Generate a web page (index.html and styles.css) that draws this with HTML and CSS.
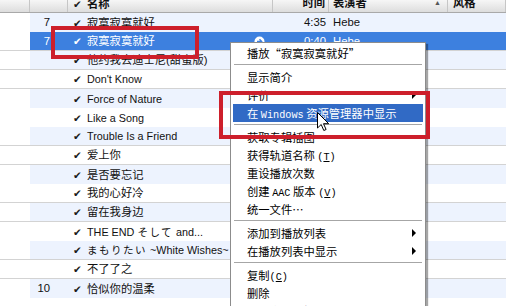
FILE: index.html
```html
<!DOCTYPE html>
<html lang="zh">
  <head>
    <meta charset="UTF-8" />
    <title>资料库</title>
    <link rel="stylesheet" href="styles.css">
  </head>
  <body>
    <div class="list">
      <div class="head">
        <span class="c-pad"></span>
        <span class="c-num"></span>
        <span class="c-name"><i class="chk">✔</i>名称</span>
        <span class="c-time">时间</span>
        <span class="c-artist">表演者<b class="sort">▲</b></span>
        <span class="c-genre">风格</span>
      </div>

      <div class="row odd">
        <span class="c-pad"></span>
        <div class="cells">
          <span class="c-num">7</span>
          <span class="c-name"><i class="chk">✔</i>寂寞寂寞就好</span>
          <span class="c-time">4:35</span>
          <span class="c-artist">Hebe</span>
          <span class="c-genre"></span>
        </div>
      </div>
      <div class="row sel line">
        <span class="c-pad"></span>
        <div class="cells">
          <span class="c-num">7</span>
          <span class="c-name"><i class="chk">✔</i>寂寞寂寞就好
            <svg class="link" width="11" height="11" viewBox="0 0 11 11"><circle cx="5.5" cy="5.5" r="5" fill="#fff"/><path d="M3 5.5h4.5M5.5 3.3l2.2 2.2-2.2 2.2" stroke="#3d80df" stroke-width="1.4" fill="none"/></svg>
          </span>
          <span class="c-time">0:40</span>
          <span class="c-artist">Hebe</span>
          <span class="c-genre"></span>
        </div>
      </div>
      <div class="row odd line">
        <span class="c-pad"></span>
        <div class="cells">
          <span class="c-num"></span>
          <span class="c-name"><i class="chk">✔</i>他约我去迪士尼(甜蜜版)</span>
        </div>
      </div>
      <div class="row line">
        <span class="c-pad"></span>
        <div class="cells">
          <span class="c-num"></span>
          <span class="c-name"><i class="chk">✔</i><span class="en">Don't Know</span></span>
        </div>
      </div>
      <div class="row odd">
        <span class="c-pad"></span>
        <div class="cells">
          <span class="c-num"></span>
          <span class="c-name"><i class="chk">✔</i><span class="en">Force of Nature</span></span>
        </div>
      </div>
      <div class="row">
        <span class="c-pad"></span>
        <div class="cells">
          <span class="c-num"></span>
          <span class="c-name"><i class="chk">✔</i><span class="en">Like a Song</span></span>
        </div>
      </div>
      <div class="row odd line">
        <span class="c-pad"></span>
        <div class="cells">
          <span class="c-num"></span>
          <span class="c-name"><i class="chk">✔</i><span class="en">Trouble Is a Friend</span></span>
        </div>
      </div>
      <div class="row line">
        <span class="c-pad"></span>
        <div class="cells">
          <span class="c-num"></span>
          <span class="c-name"><i class="chk">✔</i>爱上你</span>
        </div>
      </div>
      <div class="row odd">
        <span class="c-pad"></span>
        <div class="cells">
          <span class="c-num"></span>
          <span class="c-name"><i class="chk">✔</i>是否要忘记</span>
        </div>
      </div>
      <div class="row line">
        <span class="c-pad"></span>
        <div class="cells">
          <span class="c-num"></span>
          <span class="c-name"><i class="chk">✔</i>我的心好冷</span>
        </div>
      </div>
      <div class="row odd line">
        <span class="c-pad"></span>
        <div class="cells">
          <span class="c-num"></span>
          <span class="c-name"><i class="chk">✔</i>留在我身边</span>
        </div>
      </div>
      <div class="row">
        <span class="c-pad"></span>
        <div class="cells">
          <span class="c-num"></span>
          <span class="c-name"><i class="chk">✔</i><span class="en">THE END&nbsp;</span><span class="kana">そして</span><span class="en">&nbsp;and...</span></span>
        </div>
      </div>
      <div class="row odd line">
        <span class="c-pad"></span>
        <div class="cells">
          <span class="c-num"></span>
          <span class="c-name"><i class="chk">✔</i><span class="kana">まもりたい</span><span class="en">&nbsp;~White Wishes~</span></span>
        </div>
      </div>
      <div class="row line">
        <span class="c-pad"></span>
        <div class="cells">
          <span class="c-num"></span>
          <span class="c-name"><i class="chk">✔</i>不了了之</span>
        </div>
      </div>
      <div class="row odd">
        <span class="c-pad"></span>
        <div class="cells">
          <span class="c-num">10</span>
          <span class="c-name"><i class="chk">✔</i>恰似你的温柔</span>
        </div>
      </div>
      <div class="row">
        <span class="c-pad"></span>
        <div class="cells"></div>
      </div>
    </div>

    <!-- context menu -->
    <div class="menu">
      <div class="item">播放“寂寞寂寞就好”</div>
      <div class="sep"></div>
      <div class="item">显示简介</div>
      <div class="item sub">评价</div>
      <div class="item on">在 <span class="mono">Windows</span> 资源管理器中显示</div>
      <div class="sep"></div>
      <div class="item">获取专辑插图</div>
      <div class="item">获得轨道名称 <span class="mono">(<u>T</u>)</span></div>
      <div class="item">重设播放次数</div>
      <div class="item">创建 <span class="mono">AAC</span> 版本 <span class="mono">(<u>V</u>)</span></div>
      <div class="item">统一文件…</div>
      <div class="sep"></div>
      <div class="item sub">添加到播放列表</div>
      <div class="item sub">在播放列表中显示</div>
      <div class="sep"></div>
      <div class="item">复制<span class="mono">(<u>C</u>)</span></div>
      <div class="item">删除</div>
      <div class="item">取消全部选择</div>
    </div>

    <div class="mark mark-row"></div>
    <div class="mark mark-item"></div>

    <svg class="cursor" width="13" height="20" viewBox="0 0 13 20">
      <path d="M0.5 0.5v15.5l3.7-3.5 2.6 6 2.3-1-2.6-5.8h5.2z" fill="#fff" stroke="#000" stroke-width="1" stroke-linejoin="round"/>
    </svg>
  </body>
</html>
```

FILE: styles.css
```css
body {
  margin: 0;
  width: 520px;
  height: 306px;
  overflow: hidden;
  position: relative;
  background: #fff;
  color: #111;
  font-family: "Liberation Sans", "Noto Sans CJK SC", sans-serif;
  font-size: 11.3px;
}
.list {
  width: 506px;
}
.head {
  display: flex;
  height: 13px;
  box-sizing: border-box;
  border-bottom: 1px solid #a9a9a9;
  background: linear-gradient(#f6f6f6, #dddddd);
  font-weight: bold;
  overflow: hidden;
}
.head > span {
  box-sizing: border-box;
  height: 16px;
  margin-top: -4px;
  line-height: 14px;
  border-right: 1px solid #c6c6c6;
}
.c-pad {
  flex: none;
  width: 30px;
}
.c-num {
  flex: none;
  width: 38px;
  padding-right: 18px;
  box-sizing: border-box;
  text-align: right;
}
.c-name {
  flex: none;
  width: 205px;
  padding-left: 5px;
  box-sizing: border-box;
  display: flex;
  align-items: center;
  white-space: nowrap;
  overflow: hidden;
}
.c-time {
  flex: none;
  width: 56px;
  padding-right: 3px;
  box-sizing: border-box;
  text-align: right;
}
.c-artist {
  flex: none;
  width: 119px;
  padding: 0 6px 0 4px;
  box-sizing: border-box;
  display: flex;
  justify-content: space-between;
}
.c-genre {
  flex: none;
  width: 58px;
  padding-left: 5px;
  box-sizing: border-box;
}
.sort {
  font-size: 7px;
  color: #555;
  font-weight: normal;
}
.chk {
  display: inline-block;
  width: 14px;
  flex: none;
  font-style: normal;
  font-family: "DejaVu Sans", sans-serif;
  font-size: 10.5px;
  color: #1a1a1a;
}
.en {
  font-size: 10.8px;
}
.kana {
  letter-spacing: 1.5px;
  font-size: 10.5px;
}

.row {
  display: flex;
  height: 19px;
  line-height: 18px;
  box-sizing: border-box;
}
.row.line {
  border-bottom: 1px solid #d3d3d3;
}
.cells {
  display: flex;
  flex: 1;
}
.odd .cells {
  background: #edf3fe;
}
.sel .cells {
  background: #3d80df;
  color: #fff;
}
.sel .chk {
  color: #fff;
}
.link {
  margin-left: auto;
  margin-right: 8px;
}

.menu {
  position: absolute;
  left: 230px;
  top: 42px;
  width: 196px;
  box-sizing: border-box;
  padding: 1px 2px;
  border: 1px solid #8c8c8c;
  background: #fff;
  box-shadow: 2px 2px 1px rgba(0, 0, 0, 0.35);
  font-family: "Noto Sans CJK SC", sans-serif;
  font-size: 11.3px;
  color: #000;
}
.item {
  position: relative;
  height: 18px;
  line-height: 18px;
  padding-left: 14px;
  white-space: nowrap;
}
.item.on {
  background: #316ac5;
  color: #fff;
}
.item.sub::after {
  content: "";
  position: absolute;
  right: 7px;
  top: 5px;
  border-left: 4px solid #000;
  border-top: 4px solid transparent;
  border-bottom: 4px solid transparent;
}
.sep {
  margin: 2px 1px;
  border-top: 1px solid #a6a6a6;
  border-bottom: 1px solid #fff;
}
.mono {
  font-family: "Liberation Mono", monospace;
  font-size: 10.2px;
}

.mark {
  position: absolute;
  box-sizing: border-box;
  border: 4px solid #cd1f2b;
}
.mark-row {
  left: 51px;
  top: 26px;
  width: 148px;
  height: 33px;
}
.mark-item {
  left: 219px;
  top: 91px;
  width: 211px;
  height: 48px;
}
.cursor {
  position: absolute;
  left: 317px;
  top: 112px;
}
```
